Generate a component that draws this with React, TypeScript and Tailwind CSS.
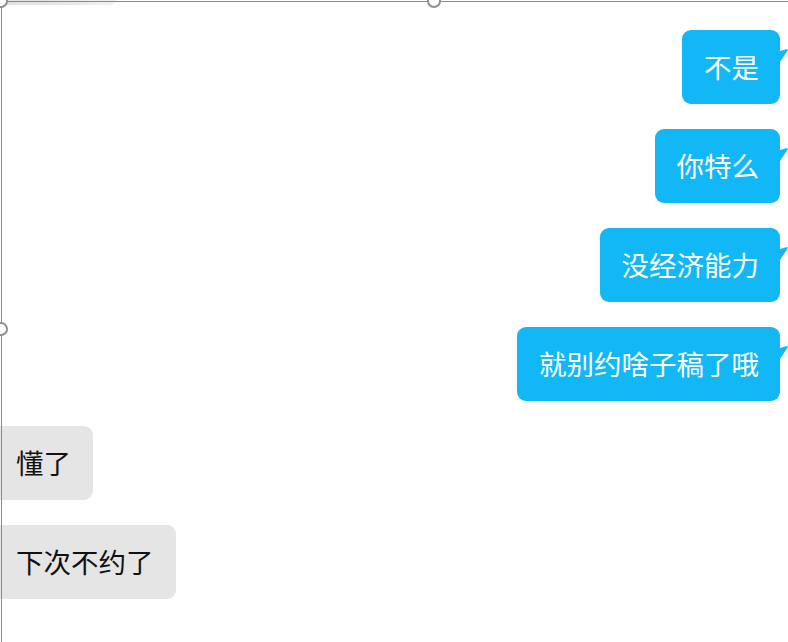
import React from 'react';

const font = { fontFamily: '"Noto Sans CJK SC", "Noto Sans", sans-serif' };

const Tail: React.FC = () => (
  <svg className="absolute left-full top-[18px]" width="8" height="14" viewBox="0 0 8 14">
    <polygon points="0,3 7,1 8,2 0,14" fill="#12b7f5" />
  </svg>
);

const Mine: React.FC<{ text: string }> = ({ text }) => (
  <div className="self-end mr-[8px] relative">
    <div className="h-[74px] flex items-center pl-[22px] pr-[21px] rounded-[9px] bg-[#12b7f5] text-white text-[27.5px] leading-none">
      {text}
    </div>
    <Tail />
  </div>
);

const Theirs: React.FC<{ text: string }> = ({ text }) => (
  <div className="self-start">
    <div className="h-[74px] flex items-center pl-[16px] pr-[22px] rounded-r-[9px] bg-[#e5e5e5] text-[#111] text-[27.5px] leading-none">
      {text}
    </div>
  </div>
);

const Handle: React.FC<{ className: string }> = ({ className }) => (
  <div className={`absolute w-[14px] h-[14px] rounded-full bg-white border-2 border-[#8f8f8f] ${className}`} />
);

export default function App() {
  return (
    <div className="w-[788px] h-[642px] relative overflow-hidden bg-white" style={font}>
      <div className="flex flex-col gap-[25px]">
        <div className="h-[5px] w-[116px] rounded-br-[6px] bg-gradient-to-r from-[#e2e2e2] via-[#e6e6e6] to-[#f2f2f2]" />
        <Mine text="不是" />
        <Mine text="你特么" />
        <Mine text="没经济能力" />
        <Mine text="就别约啥子稿了哦" />
        <Theirs text="懂了" />
        <Theirs text="下次不约了" />
      </div>

      {/* selection frame */}
      <div className="absolute left-[1px] top-[1px] right-0 bottom-0 border-t border-l border-[#8a8a8a]" />
      <Handle className="-left-[6px] -top-[6px]" />
      <Handle className="left-[427px] -top-[6px]" />
      <Handle className="-left-[6px] top-[322px]" />
    </div>
  );
}
